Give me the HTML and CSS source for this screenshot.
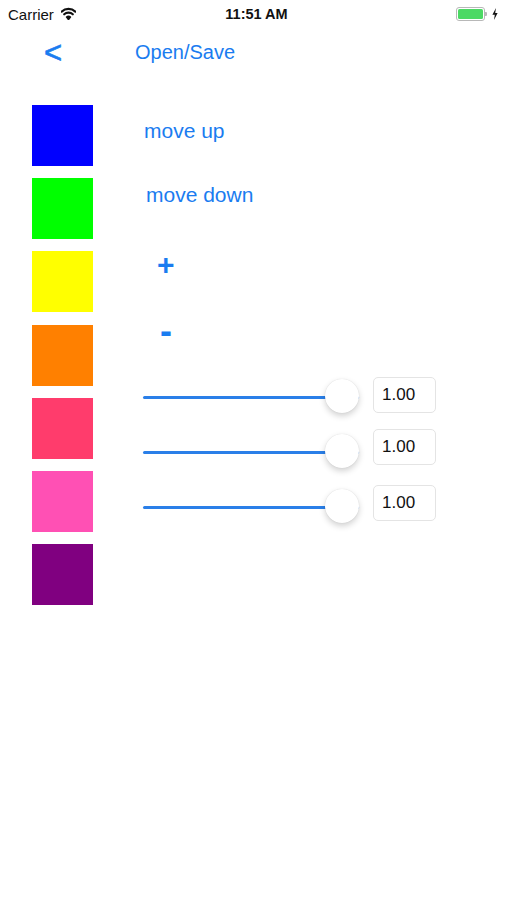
FILE: index.html
```html
<!DOCTYPE html>
<html>
<head>
<meta charset="utf-8">
<link rel="stylesheet" href="styles.css">
</head>
<body>
<div class="status">
  <div class="carrier">
    <span>Carrier</span>
    <svg class="wifi" width="15" height="13" viewBox="0 0 15 13">
      <path d="M0.6 4.6 A10 10 0 0 1 14.4 4.6" fill="none" stroke="#111" stroke-width="2.2" stroke-linecap="round"/>
      <path d="M3.2 7.3 A6.2 6.2 0 0 1 11.8 7.3" fill="none" stroke="#111" stroke-width="2.2" stroke-linecap="round"/>
      <path d="M5.6 10.1 A2.8 2.8 0 0 1 9.4 10.1 L7.5 12.4 Z" fill="#111" stroke="#111" stroke-width="1.6" stroke-linejoin="round"/>
    </svg>
  </div>
  <div class="time">11:51 AM</div>
  <div class="battery-wrap">
    <div class="battery"><div class="level"></div></div>
    <div class="nub"></div>
    <svg class="bolt" width="6" height="12" viewBox="0 0 6 12">
      <path d="M4 0 L0.4 6.8 L2.8 6.8 L2 12 L5.6 5 L3.2 5 Z" fill="#111"/>
    </svg>
  </div>
</div>
<div class="nav">
  <span class="back">&lt;</span>
  <span class="title">Open/Save</span>
</div>
<main class="content">
  <div class="swatches">
    <div class="swatch c-blue"></div>
    <div class="swatch c-green"></div>
    <div class="swatch c-yellow"></div>
    <div class="swatch c-orange"></div>
    <div class="swatch c-red"></div>
    <div class="swatch c-pink"></div>
    <div class="swatch c-purple"></div>
  </div>
  <div class="controls">
    <div class="btn move-up">move up</div>
    <div class="btn move-down">move down</div>
    <div class="btn plus">+</div>
    <div class="btn minus">-</div>
    <div class="slider-row first">
      <div class="slider"><div class="track"></div><div class="thumb"></div></div>
      <div class="field">1.00</div>
    </div>
    <div class="slider-row second">
      <div class="slider"><div class="track"></div><div class="thumb"></div></div>
      <div class="field">1.00</div>
    </div>
    <div class="slider-row third">
      <div class="slider"><div class="track"></div><div class="thumb"></div></div>
      <div class="field">1.00</div>
    </div>
  </div>
</main>
</body>
</html>
```
FILE: styles.css
```css
html, body {
  margin: 0;
  padding: 0;
  background: #fff;
}
body {
  font-family: "Liberation Sans", Arial, sans-serif;
  color: #000;
  width: 507px;
  height: 900px;
  overflow: hidden;
}

/* status bar */
.status {
  height: 28px;
  display: grid;
  grid-template-columns: 1fr auto 1fr;
  align-items: center;
  padding: 0 8px;
}
.carrier {
  display: flex;
  align-items: center;
  gap: 7px;
  font-size: 15px;
  color: #111;
}
.wifi { margin-top: -1px; }
.time {
  font-size: 14.5px;
  font-weight: bold;
  color: #111;
  margin-left: 6px;
}
.battery-wrap {
  justify-self: end;
  display: flex;
  align-items: center;
  margin-right: 1px;
}
.battery {
  width: 25px;
  height: 10px;
  border: 1.5px solid #b8b8b8;
  border-radius: 3px;
  padding: 1px;
  box-sizing: content-box;
}
.level {
  width: 100%;
  height: 100%;
  background: #4cd964;
  border-radius: 1.5px;
}
.nub {
  width: 2px;
  height: 4px;
  background: #b8b8b8;
  border-radius: 0 1px 1px 0;
}
.bolt { margin-left: 5px; }

/* nav */
.nav {
  height: 48px;
  display: flex;
  align-items: center;
  padding-left: 44px;
  color: #1a7cf0;
}
.back {
  font-size: 31px;
  line-height: 48px;
  margin-top: 1px;
  width: 91px;
  -webkit-text-stroke: 0.6px #1a7cf0;
}
.title {
  font-size: 20px;
}

/* content */
.content {
  display: grid;
  grid-template-columns: 61px auto;
  column-gap: 50px;
  padding: 29px 0 0 32px;
}
.swatches {
  display: flex;
  flex-direction: column;
  gap: 12.2px;
}
.swatch {
  width: 61px;
  height: 61px;
}
.c-blue { background: #0000ff; }
.c-green { background: #00ff00; }
.c-yellow { background: #ffff00; }
.c-orange { background: #ff8000; }
.c-red { background: #ff3c6c; }
.c-pink { background: #ff50b4; }
.c-purple { background: #800080; }

.controls {
  display: flex;
  flex-direction: column;
  align-items: flex-start;
}
.btn {
  color: #1a7cf0;
  height: 30px;
  line-height: 30px;
  font-size: 21px;
}
.move-up { margin-top: 11px; padding-left: 1px; }
.move-down { margin-top: 34px; padding-left: 3px; }
.plus {
  margin-top: 40px;
  padding-left: 14px;
  font-size: 30px;
  font-weight: bold;
}
.minus {
  margin-top: 37px;
  padding-left: 17px;
  font-size: 36px;
  font-weight: bold;
  line-height: 28px;
}

.slider-row {
  display: flex;
  align-items: center;
  height: 36px;
  margin-top: 19px;
}
.slider-row.first { margin-top: 30px; }
.slider {
  position: relative;
  width: 216px;
  height: 36px;
  display: flex;
  align-items: center;
}
.track {
  width: 100%;
  height: 3px;
  margin-top: 4px;
  background: #2a7fe8;
  border-radius: 1.5px;
}
.thumb {
  position: absolute;
  right: 0;
  top: 2px;
  width: 34px;
  height: 34px;
  border-radius: 50%;
  background: #fff;
  box-shadow: 0 3px 6px rgba(0,0,0,0.18), 0 0 1px rgba(0,0,0,0.15);
}
.field {
  margin-left: 14px;
  width: 63px;
  height: 36px;
  box-sizing: border-box;
  border: 1px solid #e4e4e4;
  border-radius: 5px;
  font-size: 17px;
  line-height: 34px;
  padding-left: 8px;
  color: #111;
}
.first .field { margin-top: 0; }
.second .field { margin-top: -6px; }
.third .field { margin-top: -4px; }
```
